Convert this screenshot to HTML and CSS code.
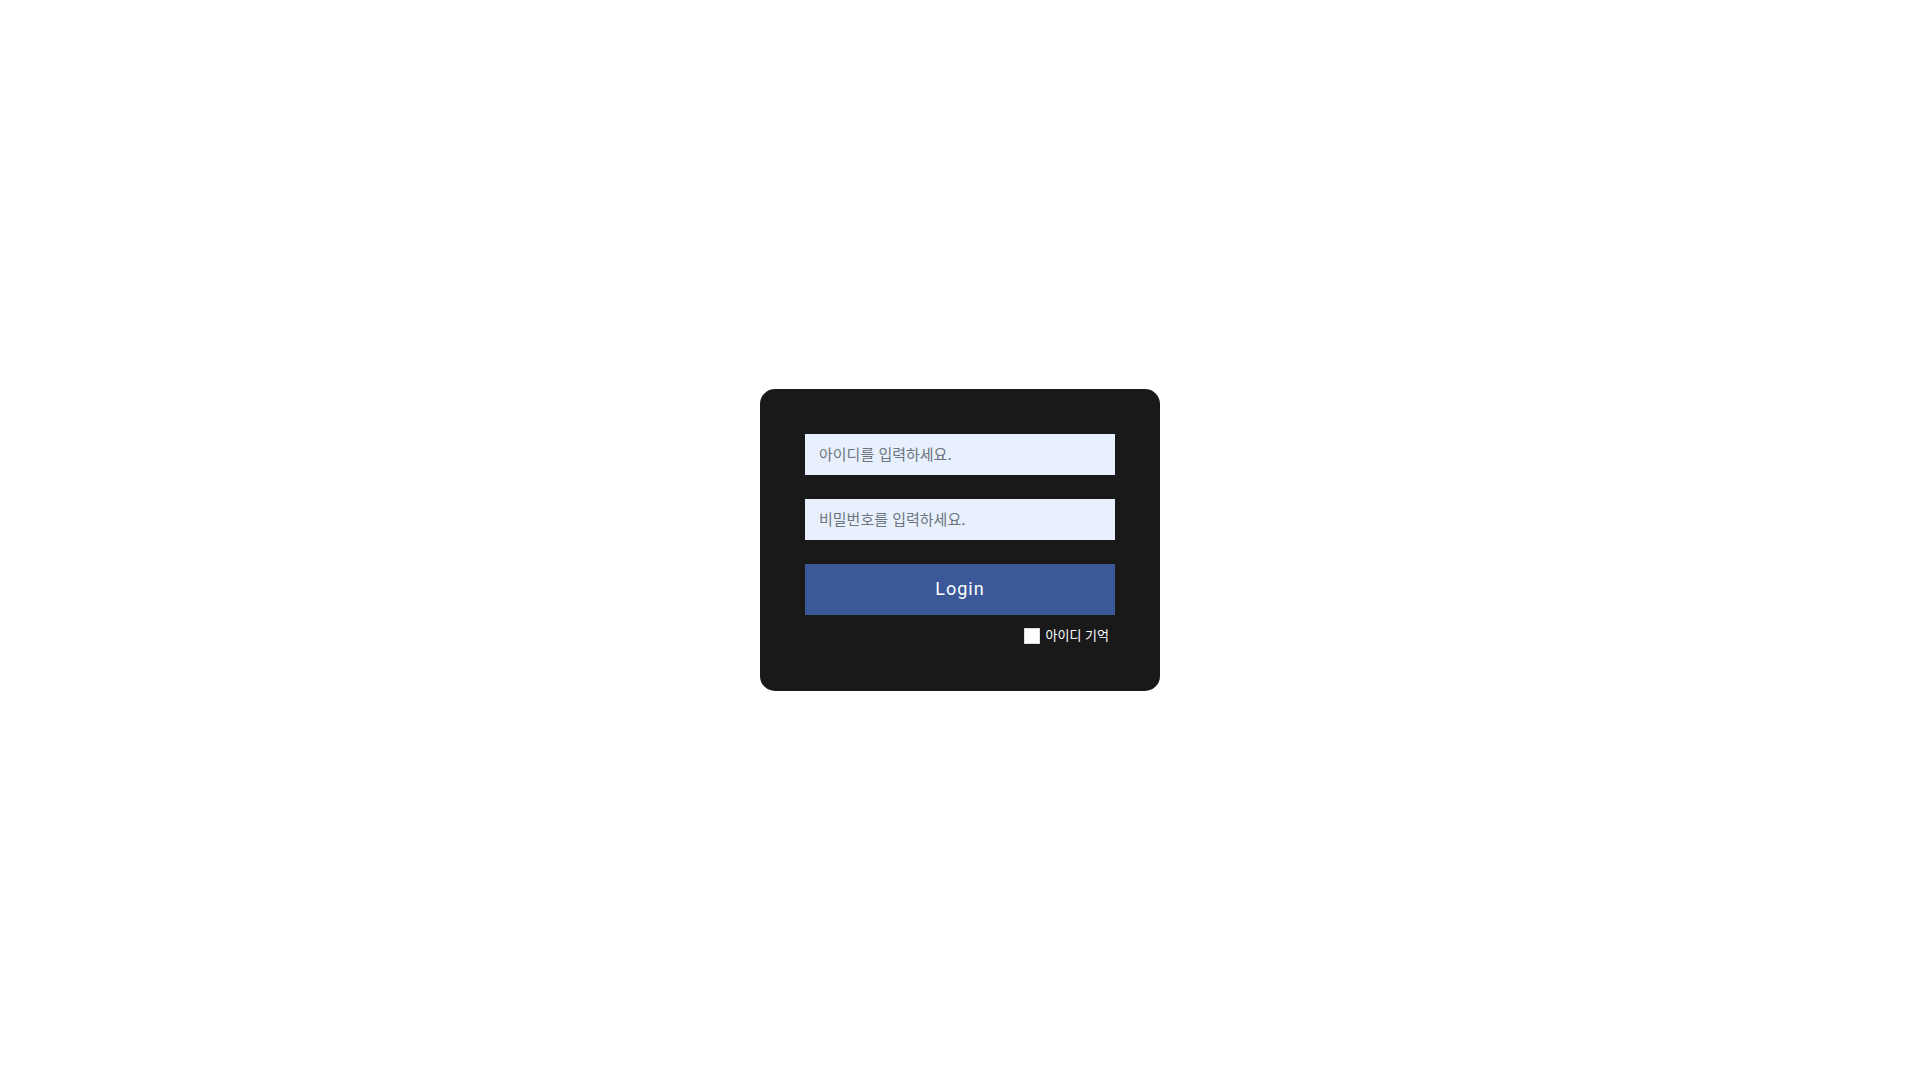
FILE: index.html
```html
<!DOCTYPE html>
<html lang="ko">
<head>
  <meta charset="UTF-8">
  <meta name="viewport" content="width=device-width, initial-scale=1.0">
  <title>Login</title>
  <link rel="stylesheet" href="styles.css">
</head>
<body>
  <main class="login-page">
    <form class="login-form" action="/login" method="POST">
      <input type="text" class="field" id="userId" name="userId" placeholder="아이디를 입력하세요." aria-label="아이디">
      <input type="password" class="field" id="password" name="password" placeholder="비밀번호를 입력하세요." aria-label="비밀번호">
      <button type="submit" class="login-button">Login</button>

      <!-- Remember the user ID -->
      <div class="remember">
        <input type="checkbox" id="rememberId" name="rememberId">
        <label for="rememberId">아이디 기억</label>
      </div>
    </form>
  </main>
</body>
</html>
```
FILE: styles.css
```css
* {
  box-sizing: border-box;
}

body {
  margin: 0;
  background-color: #fff;
  font-family: "Noto Sans CJK KR", sans-serif;
}

.login-page {
  display: flex;
  align-items: center;
  justify-content: center;
  min-height: 100vh;
}

.login-form {
  width: 100%;
  max-width: 400px;
  padding: 45px;
  border-radius: 15px;
  background-color: #191919;
}

.field {
  display: block;
  width: 100%;
  height: 41px;
  margin: 0 0 24px;
  padding: 0 14px 2px;
  border: none;
  border-radius: 0;
  background-color: #e8f0fe;
  color: #222;
  font-family: inherit;
  font-size: 15px;
}

.field::placeholder {
  color: #6c757d;
}

.login-button {
  display: block;
  width: 100%;
  height: 51px;
  padding: 0 0 2px;
  border: none;
  background-color: #3b5998;
  color: #fff;
  font-family: Roboto, sans-serif;
  font-size: 18px;
  letter-spacing: 1px;
  cursor: pointer;
}

/* Checkbox row under the button */
.remember {
  display: flex;
  align-items: center;
  justify-content: flex-end;
  gap: 6px;
  height: 16px;
  margin-top: 13px;
  margin-bottom: 2px;
  padding-right: 6px;
}

.remember input {
  appearance: none;
  width: 16px;
  height: 16px;
  margin: 0;
  border: 1px solid #ddd;
  background-color: #fff;
}

.remember input:checked {
  background-color: #3b5998;
}

.remember label {
  padding-bottom: 2px;
  color: #fff;
  font-size: 13px;
  line-height: 16px;
}
```
